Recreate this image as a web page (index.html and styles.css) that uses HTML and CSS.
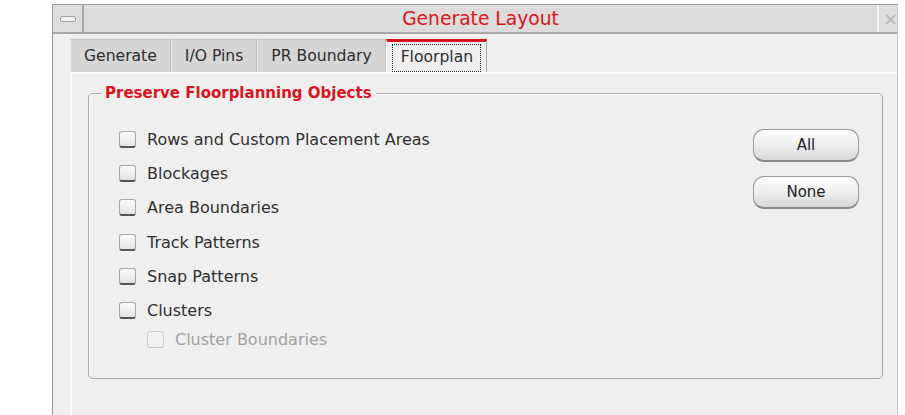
FILE: index.html
```html
<!DOCTYPE html>
<html>
<head>
<meta charset="utf-8">
<link rel="stylesheet" href="styles.css">
</head>
<body>
<div class="window">
  <div class="titlebar">
    <div class="tb-btn tb-min"><span class="min-glyph"></span></div>
    <div class="title">Generate Layout</div>
    <div class="tb-btn tb-close"><span class="close-glyph">×</span></div>
  </div>
  <div class="tabs">
    <div class="tab">Generate</div>
    <div class="tab">I/O Pins</div>
    <div class="tab">PR Boundary</div>
    <div class="tab active"><span class="focus">Floorplan</span></div>
    <div class="tab-fill"></div>
  </div>
  <div class="panel">
    <div class="group">
      <div class="legend">Preserve Floorplanning Objects</div>
      <div class="group-body">
        <div class="list">
          <div class="row"><span class="cb"></span><span class="lbl">Rows and Custom Placement Areas</span></div>
          <div class="row"><span class="cb"></span><span class="lbl">Blockages</span></div>
          <div class="row"><span class="cb"></span><span class="lbl">Area Boundaries</span></div>
          <div class="row"><span class="cb"></span><span class="lbl">Track Patterns</span></div>
          <div class="row"><span class="cb"></span><span class="lbl">Snap Patterns</span></div>
          <div class="row"><span class="cb"></span><span class="lbl">Clusters</span></div>
          <div class="row sub disabled"><span class="cb"></span><span class="lbl">Cluster Boundaries</span></div>
        </div>
        <div class="buttons">
          <button class="btn">All</button>
          <button class="btn">None</button>
        </div>
      </div>
    </div>
  </div>
</div>
</body>
</html>
```

FILE: styles.css
```css
html, body {
  margin: 0;
  padding: 0;
  background: #ffffff;
  font-family: "DejaVu Sans", "Liberation Sans", sans-serif;
}
.window {
  margin: 4px 0 0 52px;
  width: 846px;
  height: 411px;
  box-sizing: border-box;
  background: #efefef;
  border-top: 1px solid #9c9c9c;
  border-left: 1px solid #9c9c9c;
  border-right: 1px solid #c8c8c8;
  display: flex;
  flex-direction: column;
}
.titlebar {
  height: 29px;
  display: flex;
  background: #dcdcdc;
  border-bottom: 2px solid #a8a8a8;
  box-sizing: border-box;
}
.tb-btn {
  width: 29px;
  display: flex;
  align-items: center;
  justify-content: center;
  background: #dedede;
}
.tb-min {
  border-right: 2px solid #a8a8a8;
  box-sizing: border-box;
  width: 31px;
}
.min-glyph {
  width: 14px;
  height: 4px;
  border: 1px solid #a0a0a0;
  border-radius: 2px;
  background: #f4f4f4;
}
.title {
  flex: 1;
  text-align: center;
  color: #d8141e;
  font-size: 18.7px;
  line-height: 27px;
}
.tb-close {
  width: 20px;
  border-left: 2px solid #f2f2f2;
  box-sizing: border-box;
  justify-content: flex-start;
  padding-left: 4px;
  color: #b8b8b8;
  font-size: 18px;
}
.tabs {
  display: flex;
  align-items: flex-end;
  padding: 4px 0 0 17px;
  height: 38px;
  box-sizing: border-box;
}
.tab {
  height: 33px;
  box-sizing: border-box;
  padding: 0 13px;
  display: flex;
  align-items: center;
  font-size: 15.6px;
  color: #2e2e2e;
  background: #d6d6d6;
  border-top: 1px solid #c2c2c2;
  border-right: 1px solid #bdbdbd;
  border-left: 1px solid #ececec;
}
.tab.active {
  background: #efefef;
  border-top: 3px solid #d8141e;
  border-left: 1px solid #ffffff;
  border-right: 1px solid #a9a9a9;
  height: 34px;
  padding: 0 5px;
  margin-bottom: -1px;
}
.focus {
  border: 1px dotted #222;
  padding: 3px 7px 4px 8px;
  height: 28px;
  box-sizing: border-box;
  display: flex;
  align-items: center;
}
.tab-fill {
  flex: 1;
}
.panel {
  flex: 1;
  margin-left: 17px;
  border-top: 2px solid #ffffff;
  border-left: 2px solid #ffffff;
  padding: 19px 14px 0 16px;
}
.group {
  position: relative;
  height: 286px;
  box-sizing: border-box;
  border: 1px solid #a9a9a9;
  border-radius: 5px;
  box-shadow: inset 1px 1px 0 #fafafa;
}
.legend {
  position: absolute;
  top: -11px;
  left: 12px;
  padding: 0 4px;
  background: #efefef;
  color: #d8141e;
  font-weight: bold;
  font-size: 15px;
  line-height: 20px;
}
.group-body {
  display: flex;
  justify-content: space-between;
  padding: 28px 23px 0 30px;
}
.list {
  display: flex;
  flex-direction: column;
}
.row {
  height: 34.3px;
  display: flex;
  align-items: center;
  font-size: 16px;
  color: #2f2f2f;
}
.row.sub {
  padding-left: 28px;
  height: 28px;
  margin-top: -2px;
}
.cb {
  width: 17px;
  height: 17px;
  box-sizing: border-box;
  border: 1px solid #a8a8a8;
  border-bottom: 2px solid #555;
  border-radius: 3px;
  background: linear-gradient(#fbfbfb, #e4e4e4);
  margin-right: 11px;
}
.disabled {
  color: #a2a2a2;
}
.disabled .cb {
  border: 1px solid #cfcfcf;
  border-bottom: 1px solid #c4c4c4;
  background: #f0f0f0;
  margin-right: 11px;
}
.buttons {
  display: flex;
  flex-direction: column;
  gap: 14px;
  padding-top: 7px;
}
.btn {
  width: 106px;
  height: 33px;
  border: 1px solid #9a9a9a;
  border-bottom: 2px solid #8a8a8a;
  border-radius: 11px;
  background: linear-gradient(#fdfdfd, #ececec 55%, #d6d6d6);
  font-family: "DejaVu Sans", "Liberation Sans", sans-serif;
  font-size: 15px;
  color: #222;
  padding: 0;
}
```
